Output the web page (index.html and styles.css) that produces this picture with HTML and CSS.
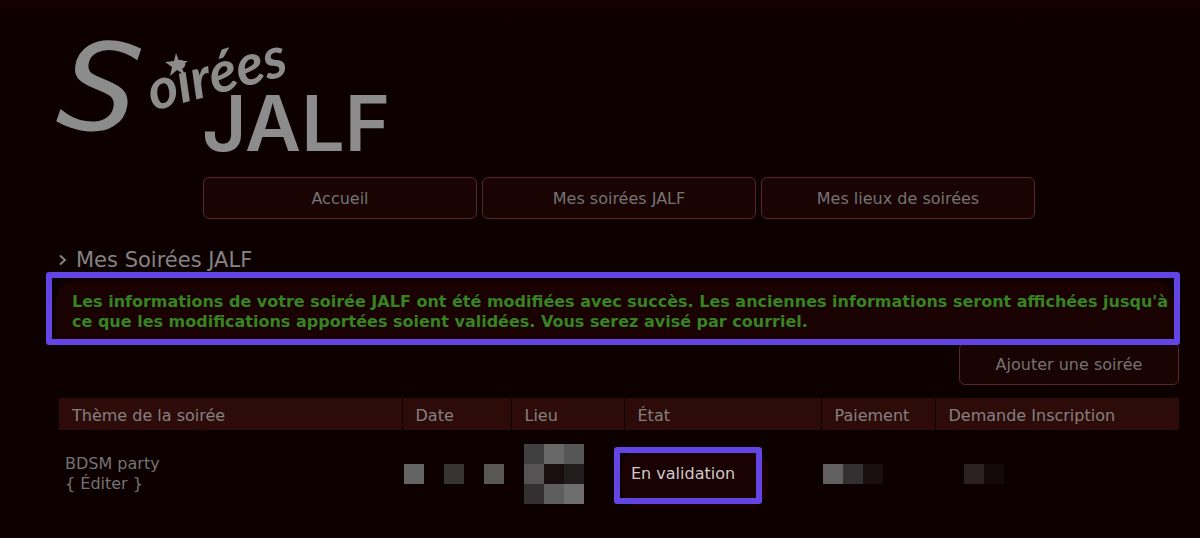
FILE: index.html
```html
<!DOCTYPE html>
<html lang="fr">

<head>
    <meta charset="UTF-8">
    <meta name="viewport" content="width=device-width, initial-scale=1.0">
    <title>Mes Soirées JALF</title>
    <link rel="stylesheet" href="styles.css">
</head>

<body>
    <div class="container">
        <header>
            <a href="#" class="logo">
                <svg width="340" height="126" viewBox="0 0 340 126" role="img" aria-label="Soirées JALF">
                    <text class="logo-initial" transform="translate(-4 98) rotate(8)">S</text>
                    <text class="logo-script" transform="translate(94 84) rotate(-15)">oirées</text>
                    <polygon points="117,26 120,34 129,34 122,39 126,48 118,43 111,49 113,40 106,35 115,34" />
                    <text class="logo-block" x="143" y="124">JALF</text>
                </svg>
            </a>
        </header>

        <nav class="menu">
            <a href="#" class="btn">Accueil</a>
            <a href="#" class="btn">Mes soirées JALF</a>
            <a href="#" class="btn">Mes lieux de soirées</a>
        </nav>

        <main>
            <h1>
                <svg width="8" height="12" viewBox="0 0 8 12" aria-hidden="true"><path d="M1 1.5 L6 6 L1 10.5" /></svg>
                Mes Soirées JALF
            </h1>

            <div class="notice">
                <p>Les informations de votre soirée JALF ont été modifiées avec succès. Les anciennes informations seront affichées jusqu'à ce que les modifications apportées soient validées. Vous serez avisé par courriel.</p>
            </div>

            <div class="actions">
                <a href="#" class="btn">Ajouter une soirée</a>
            </div>

            <table class="soirees">
                <colgroup>
                    <col>
                    <col class="col-date">
                    <col class="col-lieu">
                    <col class="col-etat">
                    <col class="col-paiement">
                    <col class="col-demande">
                </colgroup>
                <thead>
                    <tr>
                        <th>Thème de la soirée</th>
                        <th>Date</th>
                        <th>Lieu</th>
                        <th>État</th>
                        <th>Paiement</th>
                        <th>Demande Inscription</th>
                    </tr>
                </thead>
                <tbody>
                    <tr>
                        <td class="theme">BDSM party<br><a href="#">{ Éditer }</a></td>
                        <td class="date">
                            <svg width="100" height="20" aria-hidden="true">
                                <rect width="20" height="20" fill="#646464" />
                                <rect x="40" width="20" height="20" fill="#373533" />
                                <rect x="80" width="20" height="20" fill="#595754" />
                            </svg>
                        </td>
                        <td class="lieu">
                            <svg width="60" height="60" aria-hidden="true">
                                <rect width="20" height="20" fill="#404040" />
                                <rect x="20" width="20" height="20" fill="#686868" />
                                <rect x="40" width="20" height="20" fill="#565656" />
                                <rect y="20" width="20" height="20" fill="#565354" />
                                <rect x="20" y="20" width="20" height="20" fill="#190f10" />
                                <rect x="40" y="20" width="20" height="20" fill="#211d1c" />
                                <rect y="40" width="20" height="20" fill="#343031" />
                                <rect x="20" y="40" width="20" height="20" fill="#5e5e5e" />
                                <rect x="40" y="40" width="20" height="20" fill="#6e6e6e" />
                            </svg>
                        </td>
                        <td class="etat"><span class="status">En validation</span></td>
                        <td class="paiement">
                            <svg width="60" height="20" aria-hidden="true">
                                <rect width="20" height="20" fill="#625f60" />
                                <rect x="20" width="20" height="20" fill="#343031" />
                                <rect x="40" width="20" height="20" fill="#190f10" />
                            </svg>
                        </td>
                        <td class="demande">
                            <svg width="40" height="20" aria-hidden="true">
                                <rect width="20" height="20" fill="#2a2120" />
                                <rect x="20" width="20" height="20" fill="#120908" />
                            </svg>
                        </td>
                    </tr>
                </tbody>
            </table>
        </main>
    </div>
</body>

</html>
```

FILE: styles.css
```css
* {
    box-sizing: border-box;
}

body {
    margin: 0;
    background: #0d0000 linear-gradient(#160001, #0d0000 24px) no-repeat;
    color: #757373;
    font-family: Verdana, "DejaVu Sans", sans-serif;
    font-size: 16px;
    line-height: 20px;
}

a {
    color: inherit;
    text-decoration: none;
}

svg {
    display: block;
}

.container {
    margin: 0 21px 0 59px;
    padding-top: 27px;
}

.logo {
    display: inline-block;
    vertical-align: top;
}

.logo svg {
    fill: #8c8c8c;
    overflow: visible;
}

.logo-initial {
    font: italic 400 124px "DejaVu Sans", sans-serif;
}

.logo-script {
    font: italic 700 57px Lato, sans-serif;
}

.logo-block {
    font: 600 77px Inter, sans-serif;
}

.menu {
    display: flex;
    justify-content: center;
    gap: 5px;
    margin-top: 24px;
}

.btn {
    padding: 11px 10px 9px;
    border: 1px solid #5a2727;
    border-radius: 6px;
    background: #190303;
    text-align: center;
}

.menu .btn {
    flex: 0 1 274px;
}

h1 {
    display: flex;
    align-items: center;
    gap: 9px;
    margin: 29px 0 0;
    color: #858383;
    font-size: 21px;
    font-weight: normal;
    line-height: 24px;
}

h1 svg {
    fill: none;
    stroke: #858383;
    stroke-width: 2;
}

/* purple frame around the confirmation message */
.notice {
    position: relative;
    margin: 0 -1px 0 -13px;
    border: 6px solid #6344e4;
    border-radius: 3px;
}

.notice p {
    margin: 3px 0 0 4px;
    padding: 11px 0 7px 16px;
    border-radius: 20px 20px 0 0;
    background: #1a0202;
    color: #378321;
    font-weight: bold;
}

.actions {
    display: flex;
    justify-content: flex-end;
    margin-top: -2px;
}

.actions .btn {
    width: 220px;
}

.soirees {
    width: 100%;
    margin-top: 13px;
    border-collapse: collapse;
    table-layout: fixed;
}

.col-date {
    width: 109px;
}

.col-lieu {
    width: 113px;
}

.col-etat {
    width: 197px;
}

.col-paiement {
    width: 114px;
}

.col-demande {
    width: 244px;
}

.soirees th {
    padding: 8px 0 4px 13px;
    border-left: 1px solid #0d0000;
    background: #2d0b09;
    color: #858080;
    font-weight: normal;
    text-align: left;
    white-space: nowrap;
}

.soirees th:first-child {
    border-left: none;
}

.soirees td {
    height: 88px;
    padding: 0;
}

.soirees .theme {
    padding-left: 6px;
}

.soirees .date,
.soirees .paiement {
    padding-left: 2px;
}

.soirees .lieu {
    padding-left: 13px;
}

.soirees .etat {
    padding-top: 20px;
    vertical-align: top;
}

.soirees .demande {
    padding-left: 29px;
}

.status {
    position: relative;
    display: block;
    width: 147px;
    margin-left: -3px;
    padding: 14px 10px 24px;
    border-radius: 20px;
    background: #1a0202;
    color: #cfcaca;
    white-space: nowrap;
}

.status::after {
    content: "";
    position: absolute;
    top: -3px;
    right: 6px;
    bottom: 4px;
    left: -7px;
    border: 6px solid #6344e4;
    border-radius: 3px;
}
```
